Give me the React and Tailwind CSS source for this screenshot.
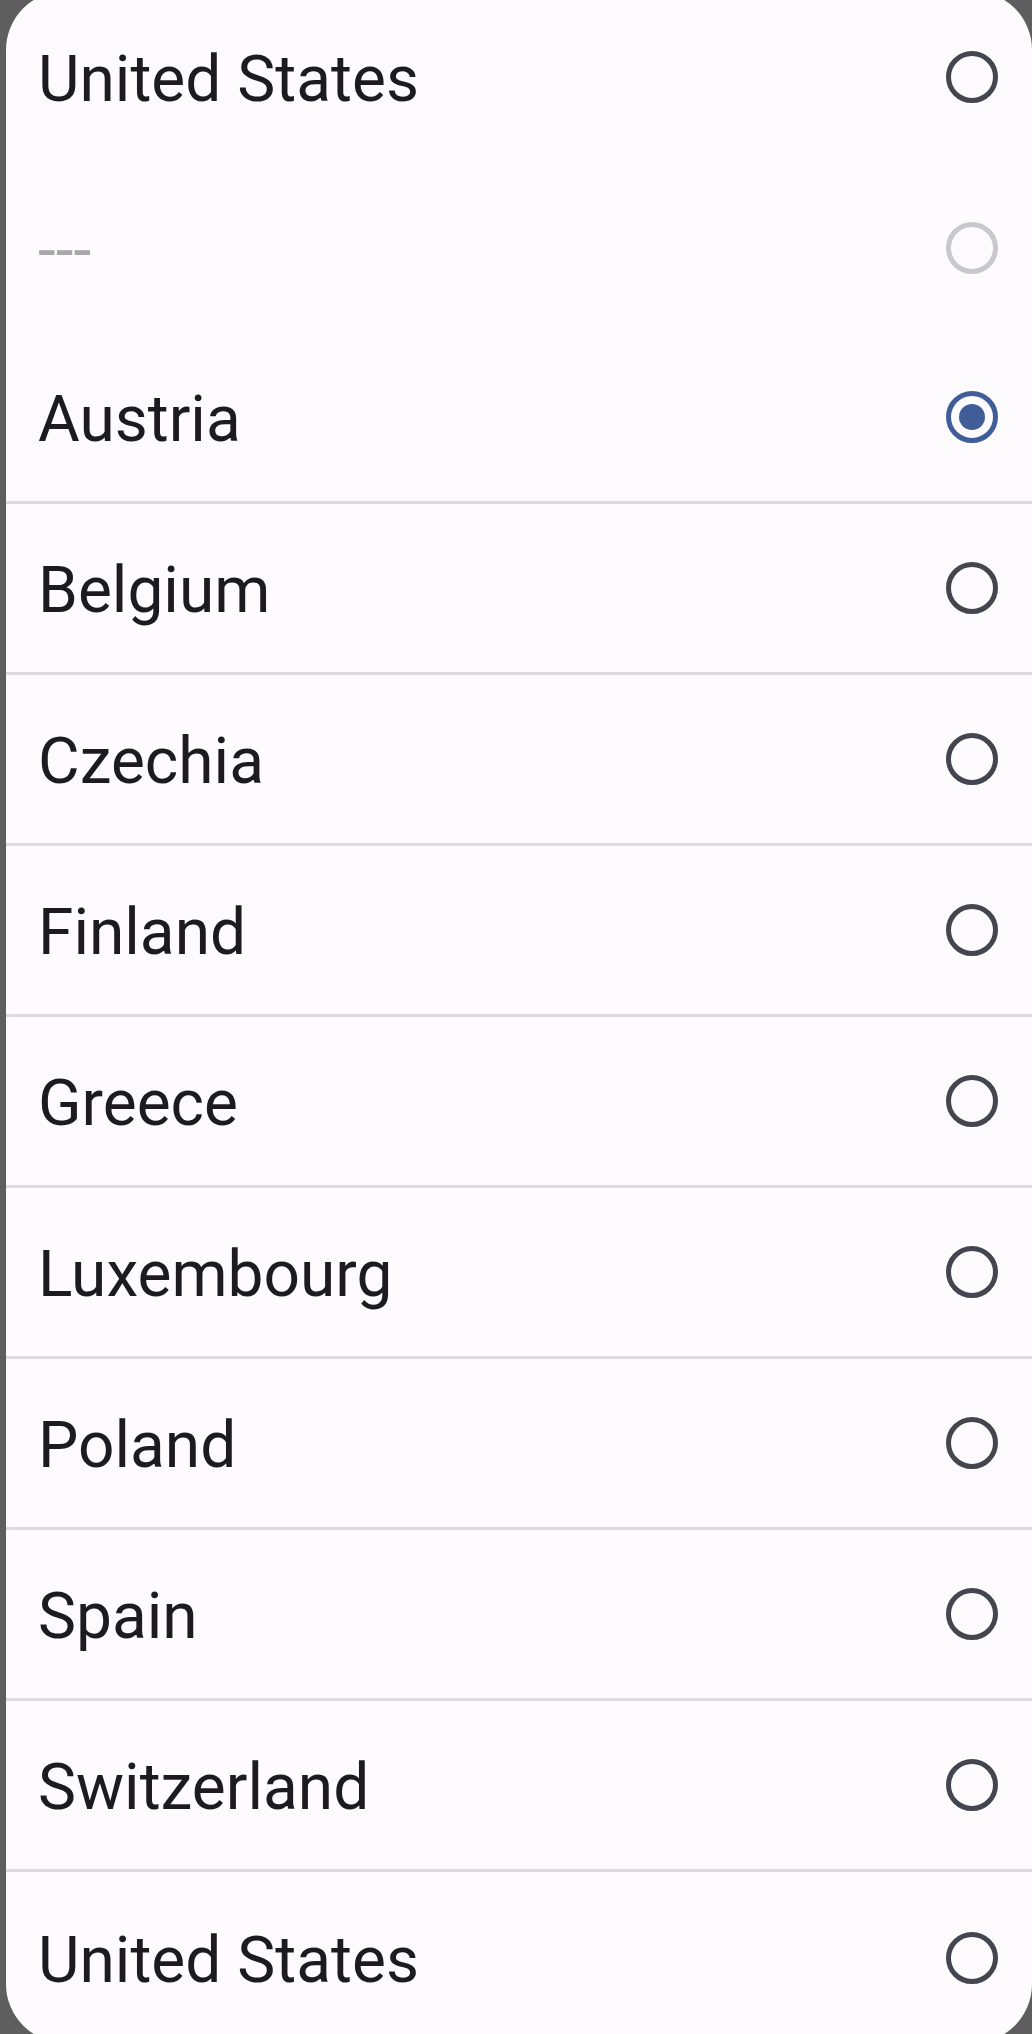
import React from "react";

const rows = [
  { label: "United States", state: "off", divider: false },
  { label: "---", state: "disabled", divider: false },
  { label: "Austria", state: "on", divider: true },
  { label: "Belgium", state: "off", divider: true },
  { label: "Czechia", state: "off", divider: true },
  { label: "Finland", state: "off", divider: true },
  { label: "Greece", state: "off", divider: true },
  { label: "Luxembourg", state: "off", divider: true },
  { label: "Poland", state: "off", divider: true },
  { label: "Spain", state: "off", divider: true },
  { label: "Switzerland", state: "off", divider: true },
  { label: "United States", state: "off", divider: false },
];

function Radio({ state }) {
  if (state === "on") {
    return (
      <div className="w-[52px] h-[52px] rounded-full border-[5px] border-[#415d98] flex items-center justify-center">
        <div className="w-[26px] h-[26px] rounded-full bg-[#415d98]" />
      </div>
    );
  }
  if (state === "disabled") {
    return <div className="w-[52px] h-[52px] rounded-full border-[5px] border-[#cac8cc]" />;
  }
  return <div className="w-[52px] h-[52px] rounded-full border-[5px] border-[#44464f]" />;
}

export default function App() {
  return (
    <div className="w-[1032px] h-[2034px] overflow-hidden bg-[#5e5e5e] pl-[6px] font-[Roboto,sans-serif]">
      <div className="-mt-[9px] h-[2052px] rounded-[59px] bg-[#fdfbfe] flex flex-col">
        {rows.map((r, i) => (
          <div
            key={i}
            className={
              r.divider
                ? "h-[171px] shrink-0 flex items-center justify-between pl-[32px] pr-[34px] border-b-[3px] border-[#dcdadd]"
                : "h-[171px] shrink-0 flex items-center justify-between pl-[32px] pr-[34px]"
            }
          >
            <span
              className={
                r.state === "disabled"
                  ? "text-[64px] leading-none pt-[6px] text-[#a8a7aa]"
                  : "text-[64px] leading-none pt-[6px] text-[#1c1b1f]"
              }
            >
              {r.label}
            </span>
            <Radio state={r.state} />
          </div>
        ))}
      </div>
    </div>
  );
}
